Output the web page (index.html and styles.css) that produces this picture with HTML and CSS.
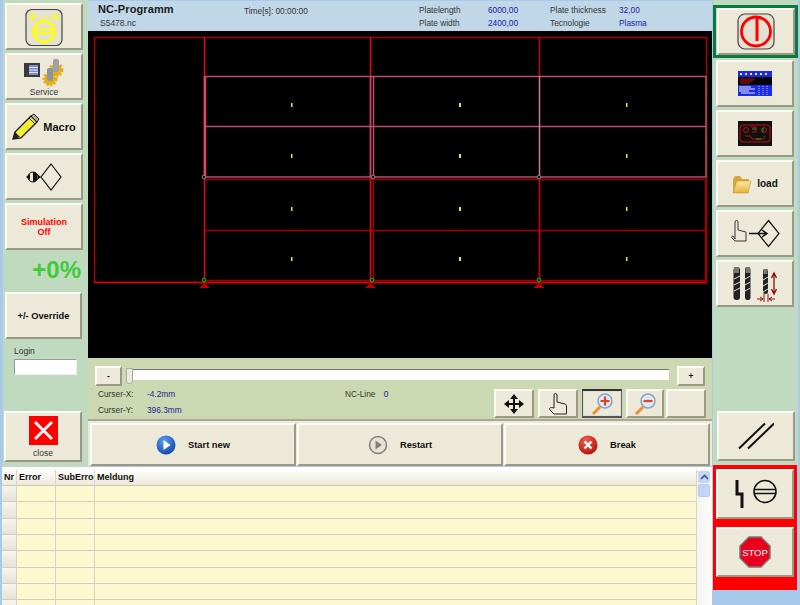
FILE: index.html
```html
<!DOCTYPE html>
<html lang="de">
<head>
<meta charset="utf-8">
<title>NC-Programm</title>
<link rel="stylesheet" href="styles.css">
</head>
<body>
<div class="app">
  <div class="main">
    <div class="upper">
      <aside class="left">
        <button class="btn side-btn"><svg width="42" height="40" viewBox="0 0 42 40"><rect x="3" y="2.500" width="36" height="36" rx="6" fill="#e4e1d0" stroke="#444" stroke-width="1.200"/><path d="M10 9.500h22" stroke="#ff0" stroke-width="1.200" stroke-dasharray="3 2"/><path d="M7.500 7.500h3v4h-3zM31.500 7.500h3v4h-3z" fill="none" stroke="#ff0" stroke-width="1.300"/><circle cx="21" cy="24.500" r="10.500" fill="none" stroke="#ff0" stroke-width="2.400"/><path d="M10 22.500h22M10 26.500h22" stroke="#ff0" stroke-width="1.800"/></svg></button>
        <button class="btn side-btn col"><svg width="44" height="30" viewBox="0 0 44 30"><rect x="2" y="6" width="16" height="14" fill="#3a3a3a"/><rect x="7" y="8" width="9" height="10" fill="#7f8ccf"/><path d="M7 10.500h9M7 13h9M7 15.500h9" stroke="#dfe3f5"/><circle cx="34" cy="13" r="6" fill="#e5b020" stroke="#e5b020" stroke-width="3" stroke-dasharray="2 1.500"/><circle cx="28" cy="22" r="6" fill="#e5b020" stroke="#e5b020" stroke-width="3" stroke-dasharray="2 1.500"/><rect x="31" y="2" width="6" height="13" rx="2" fill="#9aa2a8"/><rect x="25" y="11" width="6" height="13" rx="2" fill="#8d959c"/></svg><span class="lbl">Service</span></button>
        <button class="btn side-btn row-btn macro"><svg width="28" height="28" viewBox="0 0 28 28"><path d="M1 26l2-7L19 3l6 6L9 25z" fill="#f2ee30" stroke="#111" stroke-width="1.300"/><path d="M17 5l6 6M19 3l3-2 5 5-2 3z" fill="#aaa" stroke="#222"/><path d="M1 26l2-7 5 5z" fill="#222"/></svg><span class="bold big">Macro</span></button>
        <button class="btn side-btn"><svg width="38" height="28" viewBox="0 0 38 28"><circle cx="8" cy="14" r="5" fill="none" stroke="#111"/><path d="M8 9a5 5 0 0 1 0 10zM1 14l4-3v6zM16 14l-4-3v6z" fill="#111"/><path d="M26 1l10 13-10 13-10-13z" fill="none" stroke="#111" stroke-width="1.200"/></svg></button>
        <button class="btn side-btn sim">Simulation<br>Off</button>
        <div class="percent">+0%</div>
        <button class="btn override bold">+/- Override</button>
        <label class="login">Login<input class="login-input" type="text"></label>
        <button class="btn close-btn col"><svg width="29" height="29" viewBox="0 0 29 29"><rect width="29" height="29" fill="#f00"/><path d="M6 6l17 17M23 6L6 23" stroke="#f4f4f4" stroke-width="3"/></svg><span class="lbl">close</span></button>
      </aside>
      <section class="center">
        <header class="info">
          <div class="prog"><div class="prog-title">NC-Programm</div><div class="prog-file">S5478.nc</div></div>
          <div class="time">Time[s]: 00:00:00</div>
          <div class="plate">
            <span>Platelength</span><span class="val">6000,00</span><span>Plate thickness</span><span class="val">32,00</span>
            <span>Plate width</span><span class="val">2400,00</span><span>Tecnologie</span><span class="val">Plasma</span>
          </div>
        </header>
        <svg class="canvas" width="624" height="327" viewBox="88 31 624 327">
          <rect x="88" y="31" width="624" height="327" fill="#000"/>
          <g fill="none" stroke-width="1.500">
            <path d="M94.500 37.500h612v245h-612z" stroke="#a80000"/>
            <path d="M94 282.500h612" stroke="#e00000"/>
            <path d="M205 280.500h501M205 230.500h501M205 179.500h501" stroke="#a00000"/>
            <path d="M373.500 179v102M539.500 179v102M705.500 179v102" stroke="#9c0000"/>
            <path d="M204.500 37v245M370.500 37v245" stroke="#f00010"/>
            <path d="M539.500 37v40M539.500 179v102" stroke="#c80010"/>
            <path d="M205.500 76.500h500.500v100.500H205.500zM205 126.500h501M373.500 76v101M370.500 76v101" stroke="#b84e72"/>
            <path d="M539.500 76v101" stroke="#c87a98"/>
            <path d="M204.500 76v101" stroke="#e84a64"/>
          </g>
          <g fill="#000" stroke="#888"><circle cx="204" cy="177" r="1.800"/><circle cx="373" cy="177" r="1.800"/><circle cx="539" cy="177" r="1.800"/></g>
          <g fill="#000" stroke="#0c0"><circle cx="204" cy="280" r="1.800"/><circle cx="372" cy="280" r="1.800"/><circle cx="539" cy="280" r="1.800"/></g>
          <g fill="#c00000"><path d="M204.500 283l5.500 5h-11zM370.500 283l5.500 5h-11zM539 283l5.500 5h-11z"/></g>
          <g fill="#ee0">
            <rect x="291" y="103" width="1.500" height="4"/><rect x="459" y="103" width="2" height="4"/><rect x="626" y="103" width="1.500" height="4"/>
            <rect x="291" y="154" width="1.500" height="4"/><rect x="459" y="154" width="2" height="4"/><rect x="626" y="154" width="1.500" height="4"/>
            <rect x="291" y="207" width="1.500" height="4"/><rect x="459" y="207" width="2" height="4"/><rect x="626" y="207" width="1.500" height="4"/>
            <rect x="291" y="257" width="1.500" height="4"/><rect x="459" y="257" width="2" height="4"/><rect x="626" y="257" width="1.500" height="4"/>
          </g>
        </svg>
        <div class="controls">
          <div class="slider-row">
            <button class="btn step">-</button>
            <div class="track"><span class="thumb"></span></div>
            <button class="btn step plus">+</button>
          </div>
          <div class="status-row">
            <div class="cursor">
              <span>Curser-X:</span><span class="val">-4.2mm</span>
              <span>Curser-Y:</span><span class="val">396.3mm</span>
            </div>
            <div class="ncline">NC-Line <span class="val zero">0</span></div>
            <div class="tools">
              <button class="btn tool wide"><svg width="22" height="22" viewBox="0 0 22 22"><path d="M11 1l4 5h-3v4h4V7l5 4-5 4v-3h-4v4h3l-4 5-4-5h3v-4H6v3l-5-4 5-4v3h4V6H7z" fill="#111"/></svg></button>
              <button class="btn tool wide"><svg width="20" height="24" viewBox="0 0 20 24"><path d="M6 16V3a1.500 1.500 0 0 1 3 0v7l8 2c1 .5 1.500 1 1.500 3v7H6l-4-4c-1-1 0-3 1.500-2.500z" fill="none" stroke="#222"/></svg></button>
              <button class="btn tool wide pressed"><svg width="24" height="24" viewBox="0 0 24 24"><path d="M3 22l7-7" stroke="#e8922a" stroke-width="3"/><circle cx="15" cy="9" r="7" fill="#dfe8f6" stroke="#8aa0c0" stroke-width="1.500"/><path d="M10.500 9h9M15 4.500v9" stroke="#e8401c" stroke-width="2.200"/></svg></button>
              <button class="btn tool mid"><svg width="24" height="24" viewBox="0 0 24 24"><path d="M3 22l7-7" stroke="#e8922a" stroke-width="3"/><circle cx="15" cy="9" r="7" fill="#dfe8f6" stroke="#8aa0c0" stroke-width="1.500"/><path d="M10.500 9h9" stroke="#e8401c" stroke-width="2.200"/></svg></button>
              <button class="btn tool blank"></button>
            </div>
          </div>
        </div>
        <div class="actions">
          <button class="btn action bold"><svg width="20" height="20" viewBox="0 0 20 20"><defs><radialGradient id="blue" cx=".4" cy=".3" r=".8"><stop offset="0" stop-color="#5aa0f0"/><stop offset="1" stop-color="#0a3ea8"/></radialGradient></defs><circle cx="10" cy="10" r="9.500" fill="url(#blue)"/><path d="M7.500 5l7 5-7 5z" fill="#fff"/></svg><span>Start new</span></button>
          <button class="btn action bold"><svg width="20" height="20" viewBox="0 0 20 20"><circle cx="10" cy="10" r="8.500" fill="#e6e3d3" stroke="#808080" stroke-width="1.500"/><path d="M7.500 5.500l6.500 4.500-6.500 4.500z" fill="#808080"/></svg><span>Restart</span></button>
          <button class="btn action bold"><svg width="20" height="20" viewBox="0 0 20 20"><defs><radialGradient id="red" cx=".4" cy=".3" r=".8"><stop offset="0" stop-color="#f06050"/><stop offset="1" stop-color="#b00808"/></radialGradient></defs><circle cx="10" cy="10" r="9.500" fill="url(#red)"/><path d="M6.500 6.500l7 7M13.500 6.500l-7 7" stroke="#fff" stroke-width="2.400"/></svg><span>Break</span></button>
        </div>
      </section>
    </div>
    <div class="log">
      <div class="table">
        <div class="log-row head"><span class="c"><b>Nr</b></span><span class="c"><b>Error</b></span><span class="c"><b>SubErro</b></span><span class="c"><b>Meldung</b></span></div>
        <div class="log-row"><span class="c rh"></span><span class="c"></span><span class="c"></span><span class="c"></span></div>
        <div class="log-row"><span class="c rh"></span><span class="c"></span><span class="c"></span><span class="c"></span></div>
        <div class="log-row"><span class="c rh"></span><span class="c"></span><span class="c"></span><span class="c"></span></div>
        <div class="log-row"><span class="c rh"></span><span class="c"></span><span class="c"></span><span class="c"></span></div>
        <div class="log-row"><span class="c rh"></span><span class="c"></span><span class="c"></span><span class="c"></span></div>
        <div class="log-row"><span class="c rh"></span><span class="c"></span><span class="c"></span><span class="c"></span></div>
        <div class="log-row"><span class="c rh"></span><span class="c"></span><span class="c"></span><span class="c"></span></div>
        <div class="log-row"><span class="c rh"></span><span class="c"></span><span class="c"></span><span class="c"></span></div>
      </div>
      <div class="scroll">
        <div class="sb-up"><svg width="9" height="6" viewBox="0 0 9 6"><path d="M1 5l3.500-3.500L8 5" fill="none" stroke="#3d5688" stroke-width="1.600"/></svg></div>
        <div class="sb-thumb"></div>
      </div>
    </div>
  </div>
  <aside class="right">
    <div class="right-top">
      <div class="power"><button class="btn r-btn inner"><svg width="38" height="38" viewBox="0 0 38 38"><rect x="1" y="1" width="36" height="35" rx="7" fill="#e4e1d0" stroke="#444" stroke-width="1.200"/><circle cx="19" cy="18.500" r="14.500" fill="none" stroke="#f00" stroke-width="2.800"/><path d="M20 5v23" stroke="#f00" stroke-width="3"/></svg></button></div>
      <button class="btn r-btn"><svg width="34" height="25" viewBox="0 0 34 25"><rect width="34" height="25" fill="#1a2be8"/><rect y="6" width="34" height="8" fill="#000"/><path d="M2 3h2M7 3h2M12 3h2M17 3h2M22 3h2M27 3h2" stroke="#ffe060" stroke-width="2"/><path d="M2 8h15M2 10h13M2 12h10" stroke="#c01010"/><path d="M1 16h12M1 18h16M1 20h10M3 22h14" stroke="#eee"/><path d="M21 15v9M25 15v9M29 15v9" stroke="#ccc" stroke-dasharray="1 1"/></svg></button>
      <button class="btn r-btn"><svg width="34" height="25" viewBox="0 0 34 25"><rect width="34" height="25" fill="#111"/><rect x="2" y="4" width="30" height="17" rx="3" fill="none" stroke="#c01010"/><circle cx="8" cy="9" r="2.500" fill="none" stroke="#c01010"/><circle cx="26" cy="9" r="2.500" fill="none" stroke="#c01010"/><path d="M13 6h5v5h-4M7 15h5l3 3h10l2-3" fill="none" stroke="#c01010"/><path d="M14 8h4M18 18h5M25 7v4" stroke="#1a1" fill="none"/></svg></button>
      <button class="btn r-btn row-btn"><svg width="20" height="20" viewBox="0 0 20 20"><defs><linearGradient id="fold" x1="0" y1="0" x2="0" y2="1"><stop offset="0" stop-color="#fde9a0"/><stop offset="1" stop-color="#e6b040"/></linearGradient></defs><path d="M1 19V5l2-3h5l2 3h7v2H5z" fill="#d9a63a"/><path d="M1 19L5 7h14l-3 12z" fill="url(#fold)" stroke="#c89530" stroke-width=".6"/></svg><span class="bold load">load</span></button>
      <button class="btn r-btn"><svg width="50" height="29" viewBox="0 0 50 29"><path d="M5 20V3a1.500 1.500 0 0 1 3 0v8l8 2v9H5l-3-3c-1-1 0-2 1-2z" fill="none" stroke="#222" stroke-width=".9"/><path d="M38.500 1.500L49 14.500 38.500 27.500 28 14.500z" fill="none" stroke="#111" stroke-width="1.200"/><path d="M19 14.500h18M32 11l5 3.500-5 3.500" fill="none" stroke="#111" stroke-width="1.500"/></svg></button>
      <button class="btn r-btn"><svg width="44" height="36" viewBox="0 0 44 36"><rect x="0.500" y="1" width="6.500" height="33" rx="3" fill="#222"/><rect x="12" y="1" width="5.500" height="33" rx="2.800" fill="#222"/><rect x="30" y="3" width="5" height="25" rx="2.500" fill="#222"/><path d="M1 1h5v6H1zM12.500 1h4.500v6h-4.500zM30.500 3h4v5h-4z" fill="#777"/><path d="M1 13l6-3M1 19l6-3M1 25l6-3M12 13l5.500-3M12 19l5.500-3M12 25l5.500-3M30 14l5-3M30 20l5-3M30 26l5-3" stroke="#ddd"/><path d="M41 8v19M38.500 12l2.500-5 2.500 5M38.500 23l2.500 5 2.500-5" fill="none" stroke="#8b1010" stroke-width="1.300"/><path d="M24 33h6M36 33h6M27 31l3 2-3 2M39 31l-3 2 3 2M31 28v8M35 28v8" fill="none" stroke="#8b1010"/></svg></button>
      <button class="btn r-btn slash"><svg width="36" height="28" viewBox="0 0 36 28"><path d="M1 26.500L27 1.500M10 26.500L36 1.500" stroke="#111" stroke-width="2"/></svg></button>
    </div>
    <div class="red">
      <button class="btn r-btn tall"><svg width="48" height="30" viewBox="0 0 48 30"><path d="M6 1v14h5v14" fill="none" stroke="#111" stroke-width="3"/><circle cx="34" cy="12.500" r="11" fill="none" stroke="#111" stroke-width="1.600"/><path d="M23 10.500h22M23 14.500h22" stroke="#111" stroke-width="1.500"/></svg></button>
      <button class="btn r-btn tall"><svg width="32" height="32" viewBox="0 0 32 32"><path d="M10 1h12l9 9v12l-9 9H10l-9-9V10z" fill="#e8001c" stroke="#777" stroke-width="1.500"/><text class="stop" x="16" y="19.500" text-anchor="middle">STOP</text></svg></button>
    </div>
  </aside>
</div>
</body>
</html>
```
FILE: styles.css
```css
* { box-sizing: border-box; }
html, body { margin: 0; padding: 0; }
body {
  width: 800px; height: 605px; overflow: hidden;
  background: #a9c9ea;
  font-family: "Liberation Sans", Arial, sans-serif;
  font-size: 8.300px; color: #333;
}
.app { display: flex; width: 800px; height: 605px; }
.main { width: 712px; flex: none; display: flex; flex-direction: column; }
.upper { display: flex; height: 467px; flex: none; }
.btn {
  display: flex; align-items: center; justify-content: center;
  padding: 0; margin: 0;
  background: #ece9d8;
  border: 2px solid;
  border-color: #fbfaf4 #9c9886 #9c9886 #fbfaf4;
  font: inherit; color: #111;
}
.bold { font-weight: 700; font-size: 9.300px; color: #111; }
.big { font-size: 11px; }
.load { font-size: 10px; }
.col { flex-direction: column; }
.lbl { font-size: 8.500px; color: #333; }

.left {
  width: 85px; flex: none; margin-left: 3px;
  background: #c0dac0;
  display: flex; flex-direction: column;
  padding: 3px 5px 5px 2px;
}
.side-btn { width: 78px; height: 47px; flex: none; margin-bottom: 3px; }
.side-btn svg { flex: none; }
.row-btn { gap: 5px; }
.macro { gap: 3px; }
.sim { color: #f00; font-weight: 700; font-size: 9px; line-height: 10px; }
.percent { font-size: 24px; font-weight: 700; color: #3fcb3a; text-align: right; line-height: 28px; margin-top: 3px; height: 36px; padding-right: 2px; }
.override { width: 77px; height: 47px; flex: none; }
.login { display: block; margin: 6px 0 0 9px; font-size: 8.500px; color: #333; line-height: 12px; }
.login-input { display: block; width: 63px; height: 16px; margin: 2px 0 0; padding: 0; background: #fff; border: 1px solid; border-color: #999 #f0f0f0 #f0f0f0 #999; }
.close-btn { width: 78px; height: 51px; flex: none; margin: auto 0 0 -1px; gap: 3px; }

.center { width: 624px; flex: none; display: flex; flex-direction: column; }
.info {
  height: 30px; margin-top: 1px; background: #c0d7e8;
  display: flex; padding-left: 10px; color: #333; flex: none;
}
.prog { width: 146px; padding-top: 1px; }
.prog-title { font-size: 11px; font-weight: 700; letter-spacing: .1px; line-height: 14px; color: #1a1a1a; }
.prog-file { margin: 2px 0 0 2px; line-height: 11px; font-size: 8.500px; }
.time { width: 175px; padding-top: 4px; line-height: 12px; }
.plate { display: grid; grid-template-columns: 69px 62px 69px auto; grid-auto-rows: 13px; padding-top: 3px; line-height: 13px; }
.val { color: #1c1c9c; }
.canvas { display: block; flex: none; }

.controls { height: 63px; background: #ccd8b2; padding: 8px 7px 0; border-bottom: 2px solid #aba796; flex: none; }
.slider-row { display: flex; align-items: flex-start; }
.step { width: 27px; height: 20px; line-height: 1; font-weight: 700; flex: none; }
.plus { width: 28px; margin-left: 8px; }
.track { flex: 1; margin: 3px 0 0 4px; height: 11px; background: #fff; border-top: 1px solid #777; position: relative; }
.thumb { position: absolute; left: 0; top: -2px; width: 7px; height: 16px; background: #ece9d8; border: 1px solid #aaa; border-radius: 0 0 3px 3px; }
.status-row { display: flex; align-items: flex-start; margin-top: 3px; }
.cursor { display: grid; grid-template-columns: 49px 93px; grid-auto-rows: 16px; line-height: 16px; padding-left: 3px; margin-top: -3px; flex: none; }
.ncline { width: 149px; flex: none; margin: -3px 0 0 105px; line-height: 16px; }
.zero { margin-left: 6px; }
.tools { display: flex; gap: 4px; }
.tool { height: 29px; flex: none; }
.wide { width: 40px; }
.mid { width: 38px; }
.blank { width: 40px; margin-left: -2px; }
.pressed { border-color: #333 #666 #555 #555; box-shadow: inset 0 0 0 1px #ddd; border-width: 2px 1px; }
.actions { display: flex; height: 45px; padding: 2px 2px 0; gap: 1px; flex: none; background: #ece9d8; }
.action { flex: 1; gap: 12px; }

.log { flex: 1; margin-left: 2px; display: flex; background: #fff; min-height: 0; overflow: hidden; padding-top: 3px; }
.table { flex: 1; }
.log-row { display: grid; grid-template-columns: 15px 39px 39px 1fr; height: 16.330px; }
.c { background: #fcf9d0; border-right: 1px solid #d8d6c8; border-bottom: 1px solid #d0cebe; display: block; }
.head { height: 16px; }
.head .c { background: linear-gradient(#fdfdfb, #ece9d8); border-bottom-color: #c8c6b6; padding: 1px 0 0 2px; font-size: 9px; line-height: 13px; color: #111; overflow: hidden; white-space: nowrap; }
.rh { background: linear-gradient(#f6f5ee, #e6e3d4); }
.scroll { width: 15px; flex: none; background: linear-gradient(90deg, #f4f4ee, #fdfdfb); }
.sb-up { height: 12px; width: 12px; margin: 1px 0 0 1px; background: #c4d4f6; display: flex; align-items: center; justify-content: center; border-radius: 2px; }
.sb-thumb { height: 13px; width: 12px; margin: 1px 0 0 1px; background: #c4d4f6; border: 1px solid #b8caf0; border-radius: 2px; }

.right { width: 87px; flex: none; margin-left: 1px; display: flex; flex-direction: column; padding-right: 2px; }
.right-top { height: 465px; flex: none; background: #c0dac0; padding: 5px 0 0 3px; display: flex; flex-direction: column; align-items: flex-start; }
.power { width: 85px; margin: 0 0 2px -3px; border: 3px solid #0b7a3e; height: 53px; flex: none; display: flex; align-items: center; justify-content: center; }
.r-btn { width: 78px; height: 47px; flex: none; margin-bottom: 3px; }
.power .inner { width: 78px; height: 47px; margin: 0; }
.slash { height: 50px; margin-top: auto; margin-bottom: 4px; margin-left: 1px; }
.red { background: #f00; width: 84px; height: 125px; flex: none; padding: 4px 3px 0; display: flex; flex-direction: column; gap: 8px; }
.red .tall { height: 50px; margin: 0; }
.stop { fill: #fff; font-size: 9.500px; font-family: "Liberation Sans", Arial, sans-serif; }
```
